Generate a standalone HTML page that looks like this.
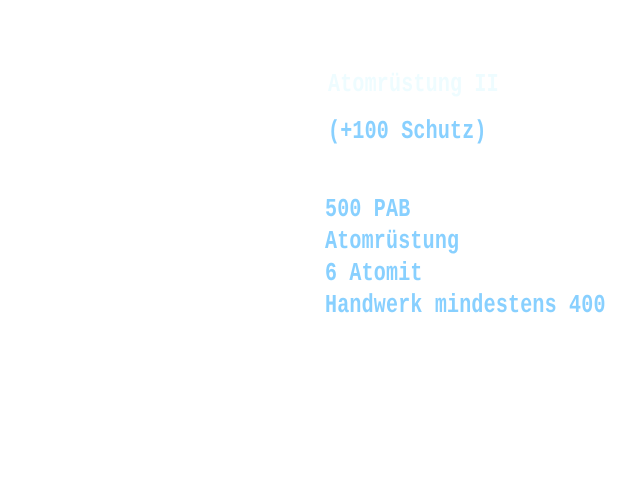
<!DOCTYPE html>
<html><head><meta charset="utf-8"><style>
html,body{margin:0;padding:0;background:#fff;width:640px;height:480px;overflow:hidden;position:relative}
.t{position:absolute;font-family:"Liberation Mono",monospace;font-weight:bold;font-size:20px;line-height:20px;letter-spacing:0.2px;white-space:pre;color:#88d0ff;transform:scaleY(1.3);transform-origin:left bottom}
</style></head><body>
<div class="t" style="left:328px;top:79px;color:#eefcff">Atomrüstung II</div>
<div class="t" style="left:328px;top:126px">(+100 Schutz)</div>
<div class="t" style="left:325px;top:204px">500 PAB</div>
<div class="t" style="left:325px;top:236px">Atomrüstung</div>
<div class="t" style="left:325px;top:268px">6 Atomit</div>
<div class="t" style="left:325px;top:300px">Handwerk mindestens 400</div>
</body></html>
